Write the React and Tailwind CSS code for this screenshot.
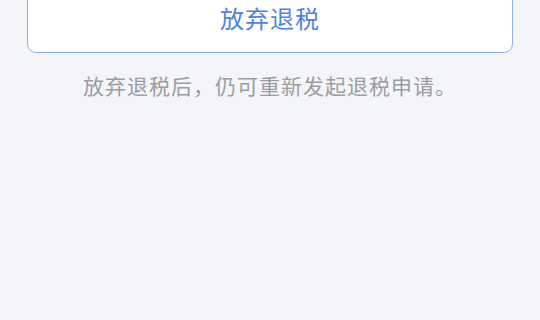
export default function App() {
  return (
    <div
      className="w-[540px] h-[320px] overflow-hidden bg-[#f4f5f9] px-[27px]"
      style={{ fontFamily: '"Noto Sans CJK SC", "Noto Sans", sans-serif' }}
    >
      <button className="-mt-[14px] flex h-[67px] w-full items-center justify-center rounded-[9px] border border-[#8fb0e6] bg-white pb-[4px] text-[24px] leading-[30px] text-[#4a85de]">
        <span className="tracking-[1px]">放弃退税</span>
      </button>
      <p className="mt-[17px] text-center text-[21px] leading-[30px] tracking-[1px] text-[#9a9da4]">
        放弃退税后，仍可重新发起退税申请。
      </p>
    </div>
  );
}
